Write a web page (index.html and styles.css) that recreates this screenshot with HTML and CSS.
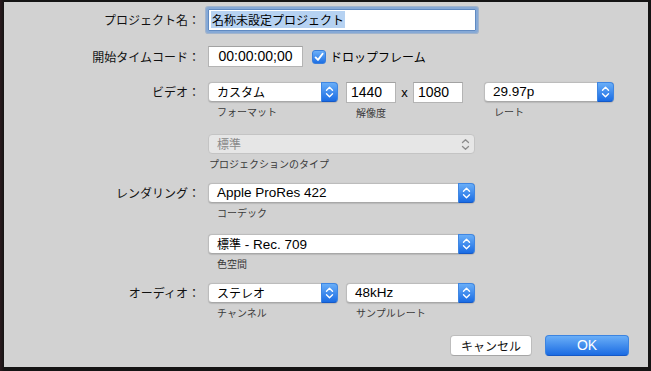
FILE: index.html
```html
<!DOCTYPE html>
<html lang="ja">
<head>
    <meta charset="UTF-8">
    <title>プロジェクト設定</title>
    <link rel="stylesheet" href="styles.css">
</head>
<body>
    <div class="dialog">
        <div class="row row-name">
            <div class="label">プロジェクト名：</div>
            <div class="field field-name"><span class="selection">名称未設定プロジェクト</span></div>
        </div>

        <div class="row row-timecode">
            <div class="label">開始タイムコード：</div>
            <div class="controls">
                <div class="field field-timecode">00:00:00;00</div>
                <span class="checkbox">
                    <svg width="14" height="14" viewBox="0 0 14 14"><path d="M3.6 7.4 L6 9.9 L10.6 3.8" fill="none" stroke="#fff" stroke-width="1.9" stroke-linecap="round" stroke-linejoin="round"/></svg>
                </span>
                <span class="check-label">ドロップフレーム</span>
            </div>
        </div>

        <div class="row row-video">
            <div class="label">ビデオ：</div>
            <div class="controls">
                <div class="group">
                    <div class="popup popup-short">
                        <span class="value ja">カスタム</span>
                        <span class="arrows"><svg width="17" height="20" viewBox="0 0 17 20"><path d="M5.5 8.2 L8.5 5.2 L11.5 8.2 M5.5 11.8 L8.5 14.8 L11.5 11.8" fill="none" stroke="#fff" stroke-width="1.4" stroke-linecap="round" stroke-linejoin="round"/></svg></span>
                    </div>
                    <div class="sublabel">フォーマット</div>
                </div>
                <div class="group group-size">
                    <div class="size">
                        <div class="field field-num">1440</div>
                        <span class="times">x</span>
                        <div class="field field-num">1080</div>
                    </div>
                    <div class="sublabel">解像度</div>
                </div>
                <div class="group group-rate">
                    <div class="popup popup-short">
                        <span class="value">29.97p</span>
                        <span class="arrows"><svg width="17" height="20" viewBox="0 0 17 20"><path d="M5.5 8.2 L8.5 5.2 L11.5 8.2 M5.5 11.8 L8.5 14.8 L11.5 11.8" fill="none" stroke="#fff" stroke-width="1.4" stroke-linecap="round" stroke-linejoin="round"/></svg></span>
                    </div>
                    <div class="sublabel">レート</div>
                </div>
            </div>
        </div>

        <div class="row row-projection">
            <div class="label"></div>
            <div class="group">
                <div class="popup popup-long disabled">
                    <span class="value ja">標準</span>
                    <span class="arrows"><svg width="17" height="19" viewBox="0 0 17 19"><path d="M5.5 7.6 L8.5 4.8 L11.5 7.6 M5.5 11.4 L8.5 14.2 L11.5 11.4" fill="none" stroke="#8c8c8c" stroke-width="1.3" stroke-linecap="round" stroke-linejoin="round"/></svg></span>
                </div>
                <div class="sublabel flush">プロジェクションのタイプ</div>
            </div>
        </div>

        <div class="row row-codec">
            <div class="label">レンダリング：</div>
            <div class="group">
                <div class="popup popup-long">
                    <span class="value">Apple ProRes 422</span>
                    <span class="arrows"><svg width="17" height="20" viewBox="0 0 17 20"><path d="M5.5 8.2 L8.5 5.2 L11.5 8.2 M5.5 11.8 L8.5 14.8 L11.5 11.8" fill="none" stroke="#fff" stroke-width="1.4" stroke-linecap="round" stroke-linejoin="round"/></svg></span>
                </div>
                <div class="sublabel">コーデック</div>
            </div>
        </div>

        <div class="row row-color">
            <div class="label"></div>
            <div class="group">
                <div class="popup popup-long">
                    <span class="value"><span class="ja">標準</span> - Rec. 709</span>
                    <span class="arrows"><svg width="17" height="20" viewBox="0 0 17 20"><path d="M5.5 8.2 L8.5 5.2 L11.5 8.2 M5.5 11.8 L8.5 14.8 L11.5 11.8" fill="none" stroke="#fff" stroke-width="1.4" stroke-linecap="round" stroke-linejoin="round"/></svg></span>
                </div>
                <div class="sublabel">色空間</div>
            </div>
        </div>

        <div class="row row-audio">
            <div class="label">オーディオ：</div>
            <div class="controls">
                <div class="group">
                    <div class="popup popup-short">
                        <span class="value ja">ステレオ</span>
                        <span class="arrows"><svg width="17" height="20" viewBox="0 0 17 20"><path d="M5.5 8.2 L8.5 5.2 L11.5 8.2 M5.5 11.8 L8.5 14.8 L11.5 11.8" fill="none" stroke="#fff" stroke-width="1.4" stroke-linecap="round" stroke-linejoin="round"/></svg></span>
                    </div>
                    <div class="sublabel">チャンネル</div>
                </div>
                <div class="group group-rate-audio">
                    <div class="popup popup-short">
                        <span class="value">48kHz</span>
                        <span class="arrows"><svg width="17" height="20" viewBox="0 0 17 20"><path d="M5.5 8.2 L8.5 5.2 L11.5 8.2 M5.5 11.8 L8.5 14.8 L11.5 11.8" fill="none" stroke="#fff" stroke-width="1.4" stroke-linecap="round" stroke-linejoin="round"/></svg></span>
                    </div>
                    <div class="sublabel">サンプルレート</div>
                </div>
            </div>
        </div>

        <div class="buttons">
            <button class="button button-cancel">キャンセル</button>
            <button class="button button-ok">OK</button>
        </div>
    </div>
</body>
</html>
```

FILE: styles.css
```css
* {
    box-sizing: border-box;
}

body {
    margin: 0;
    height: 371px;
    overflow: hidden;
    background: linear-gradient(90deg, #2a1a1e 0, #151414 4px, #151414 100%);
    font-family: "Liberation Sans", "Noto Sans CJK JP", sans-serif;
    font-size: 13px;
    color: #000;
}

.dialog {
    margin: 2px 3px 4px 4px;
    height: 365px;
    padding-top: 7px;
    background: #d2d2d2;
}

.ja {
    font-family: "Noto Sans CJK JP", sans-serif;
    font-size: 12px;
}

.row {
    display: grid;
    grid-template-columns: 196px auto;
    column-gap: 8px;
    align-items: start;
}

.label {
    font-family: "Noto Sans CJK JP", sans-serif;
    font-size: 12px;
    text-align: right;
    line-height: 20px;
    color: #111;
}

.row-name .label {
    line-height: 22px;
}

.row-timecode {
    margin-top: 15px;
}

.row-timecode .label {
    line-height: 21px;
}

.row-video {
    margin-top: 15px;
}

.row-projection {
    margin-top: 15px;
}

.row-codec {
    margin-top: 13px;
}

.row-color {
    margin-top: 15px;
}

.row-audio {
    margin-top: 13px;
}

.controls {
    display: flex;
    align-items: flex-start;
}

.row-timecode .controls {
    align-items: center;
}

/* text fields */
.field {
    background: #fff;
    border: 1px solid #b4b4b4;
    border-top-color: #a2a2a2;
    height: 21px;
    line-height: 19px;
    white-space: nowrap;
}

.field-name {
    width: 268px;
    height: 22px;
    line-height: 20px;
    padding-left: 2px;
    border-color: #5f8ac2;
    border-radius: 1px;
    box-shadow: 0 0 0 2px #86a9d6, 0 0 0 3px rgba(120, 155, 200, 0.55);
}

.selection {
    display: inline-block;
    background: #b6d2f2;
    font-family: "Noto Sans CJK JP", sans-serif;
    font-size: 12px;
    line-height: 17px;
    padding: 0 1px;
    vertical-align: middle;
    margin-top: -2px;
}

.field-timecode {
    width: 95px;
    text-align: center;
    font-size: 14px;
}

.field-num {
    width: 50px;
    padding-left: 4px;
    font-size: 14px;
}

.checkbox {
    display: inline-block;
    width: 14px;
    height: 14px;
    margin-left: 9px;
    border-radius: 3px;
    background: linear-gradient(#6cb0f8, #1d6fe4);
    border: 1px solid #3a7fdc;
}

.checkbox svg {
    display: block;
    margin: -1px;
}

.check-label {
    margin-left: 4px;
    font-family: "Noto Sans CJK JP", sans-serif;
    font-size: 12px;
    line-height: 21px;
}

/* popup buttons */
.popup {
    display: flex;
    align-items: center;
    height: 20px;
    background: #fff;
    border: 1px solid #bcbcbc;
    border-bottom-color: #a8a8a8;
    border-radius: 4px;
    box-shadow: 0 0.5px 1px rgba(0, 0, 0, 0.12);
}

.popup-short {
    width: 130px;
}

.popup-long {
    width: 267px;
}

.popup .value {
    flex: 1;
    padding-left: 8px;
    font-size: 13.5px;
    line-height: 18px;
    white-space: nowrap;
}

.popup .value.ja,
.popup .value .ja {
    font-size: 12px;
}

.popup .arrows {
    align-self: stretch;
    width: 17px;
    margin: -1px -1px -1px 0;
    border-radius: 0 4px 4px 0;
    background: linear-gradient(#69aef8, #1a6ce4);
    border: 1px solid #3f86e2;
    border-bottom-color: #1459c8;
}

.popup .arrows svg {
    display: block;
    margin: -1px;
}

.popup.disabled {
    height: 20px;
    background: #e6e6e6;
    border-color: #c4c4c4;
    box-shadow: none;
}

.popup.disabled .value {
    color: #8a8a8a;
}

.popup.disabled .arrows {
    background: none;
    border: none;
    margin: 0;
}

.popup.disabled .arrows svg {
    margin: 0;
}

.sublabel {
    margin-top: 4px;
    padding-left: 9px;
    font-family: "Noto Sans CJK JP", sans-serif;
    font-size: 10px;
    line-height: 12px;
    color: #3a3a3a;
    white-space: nowrap;
}

.sublabel.flush {
    padding-left: 1px;
}

.group-size {
    margin-left: 8px;
}

.group-size .sublabel {
    padding-left: 10px;
}

.size {
    display: flex;
    align-items: center;
}

.times {
    width: 17px;
    text-align: center;
    font-size: 13px;
}

.group-rate {
    margin-left: 21px;
}

.group-rate .sublabel,
.group-rate-audio .sublabel {
    padding-left: 10px;
}

.group-rate-audio {
    margin-left: 8px;
}

.group-rate-audio .popup {
    width: 129px;
}

/* bottom buttons */
.buttons {
    display: flex;
    justify-content: flex-end;
    gap: 13px;
    margin-top: 16px;
    padding-right: 19px;
}

.button {
    height: 21px;
    padding: 0;
    border-radius: 4px;
    font-family: "Liberation Sans", "Noto Sans CJK JP", sans-serif;
    line-height: 19px;
}

.button-cancel {
    width: 82px;
    background: #fff;
    border: 1px solid #bdbdbd;
    border-bottom-color: #a6a6a6;
    font-family: "Noto Sans CJK JP", sans-serif;
    font-size: 12px;
    color: #111;
}

.button-ok {
    width: 84px;
    background: linear-gradient(#6aaef7, #1b6ce3);
    border: 1px solid #3c84e0;
    border-bottom-color: #1458c6;
    color: #fff;
    font-size: 14px;
}
```
